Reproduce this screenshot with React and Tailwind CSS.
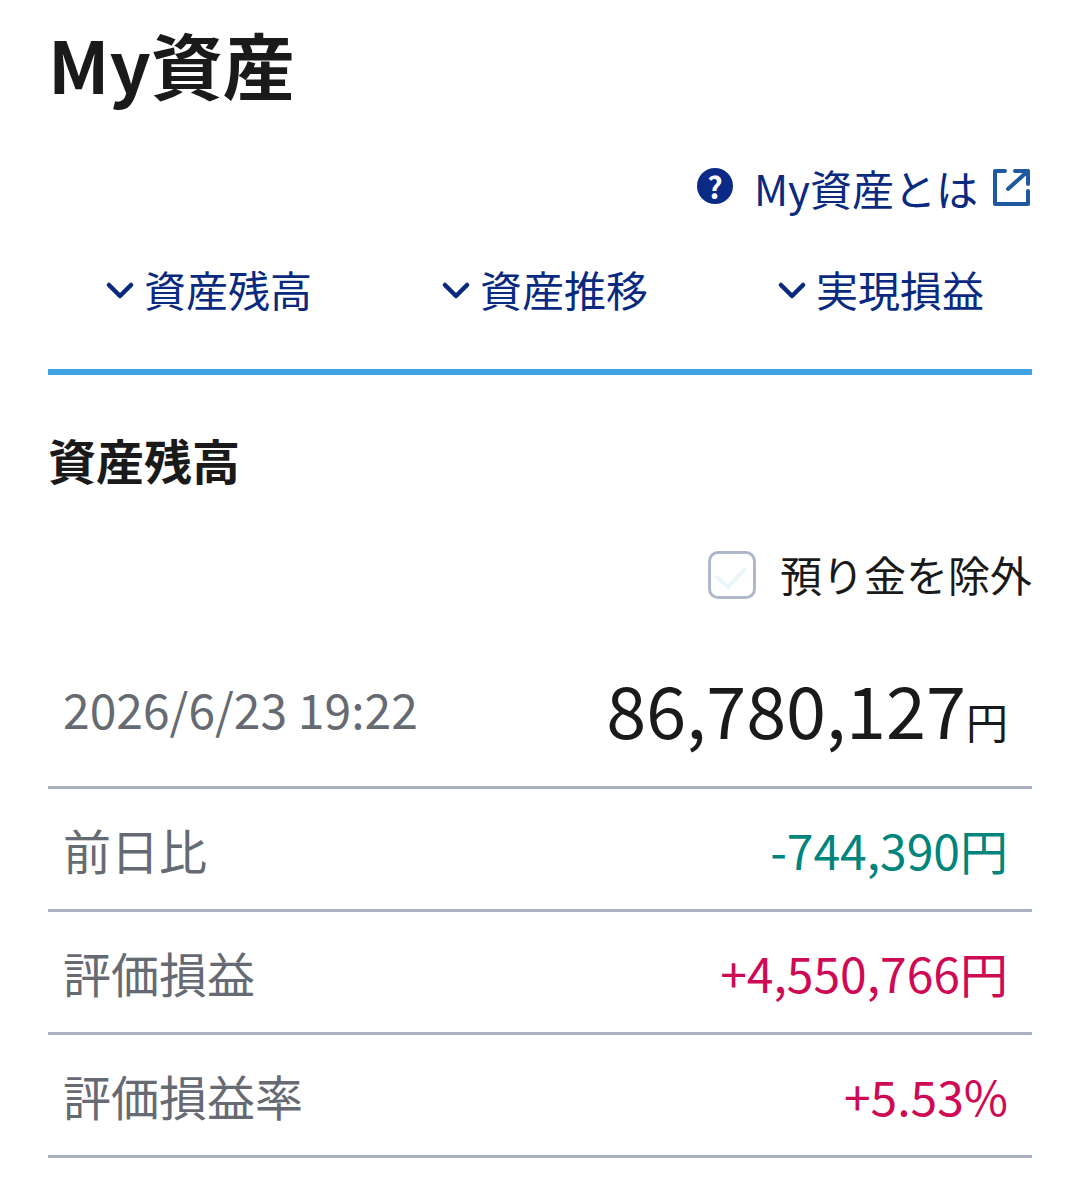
const rows = [
  { label: "前日比", value: "-744,390円", color: "text-[#00857c]" },
  { label: "評価損益", value: "+4,550,766円", color: "text-[#cf0a55]" },
  { label: "評価損益率", value: "+5.53%", color: "text-[#cf0a55]" },
];

const tabs = ["資産残高", "資産推移", "実現損益"];

export default function App() {
  return (
    <div className="h-[1194px] w-[1080px] overflow-hidden bg-white px-12 font-['Noto_Sans_CJK_JP','Noto_Sans',sans-serif] text-[#1a1a1a]">
      <h1 className="pt-[11px] text-[72px] leading-[104px] font-bold">My資産</h1>

      <div className="mt-[42px] flex h-[60px] items-center justify-end text-[42px] text-[#0a2a7f]">
        <span className="mb-[2px] flex h-9 w-9 items-center justify-center rounded-full bg-[#0a2a85] text-[30px] leading-none font-bold text-white">?</span>
        <span className="ml-[21px]">My資産とは</span>
        <svg className="mr-[2px] ml-[15px] h-[37px] w-[37px]" viewBox="0 0 37 37" fill="none" stroke="#1f5aa0" strokeWidth="4" strokeLinejoin="round" strokeLinecap="round">
          <path d="M12 2H2v33h33V22" />
          <path d="M15 20L35 2M22 2h13v13" />
        </svg>
      </div>

      <div className="mt-[41px] flex h-[109px] gap-[130px] pl-[58px] text-[42px] text-[#0a2a7f]">
        {tabs.map((tab) => (
          <div key={tab} className="flex h-[60px] items-center">
            <svg className="mt-[6px] mr-[10px] h-[20px] w-[28px]" viewBox="0 0 28 20" fill="none" stroke="#0a2a7f" strokeWidth="4.5" strokeLinecap="round" strokeLinejoin="round">
              <path d="M3 4l11 11L25 4" />
            </svg>
            <span>{tab}</span>
          </div>
        ))}
      </div>
      <div className="mt-[2px] h-[6px] bg-[#3fa3e3]" />

      <h2 className="mt-[49px] text-[48px] leading-[70px] font-bold">資産残高</h2>

      <div className="mt-[48px] flex h-[62px] items-center justify-end">
        <span className="relative mt-[3px] h-[48px] w-[48px] rounded-[10px] border-[3px] border-[#aeb8c8]">
          <svg className="absolute inset-0 h-[42px] w-[42px]" viewBox="0 0 42 42" fill="none" stroke="#eaf6fb" strokeWidth="4">
            <path d="M5 22l12 11L35 14" />
          </svg>
        </span>
        <span className="ml-[24px] text-[42px]">預り金を除外</span>
      </div>

      <div className="mt-[25px] flex h-[160px] items-center justify-between border-b-[3px] border-[#a9b1bf] pr-6 pl-[15px]">
        <span className="text-[48px] text-[#666b73]">2026/6/23 19:22</span>
        <span className="flex items-baseline">
          <span className="text-[72px]">86,780,127</span>
          <span className="text-[42px]">円</span>
        </span>
      </div>

      {rows.map((row) => (
        <div key={row.label} className="flex h-[123px] items-center justify-between border-b-[3px] border-[#a9b1bf] pr-6 pl-[15px]">
          <span className="text-[48px] text-[#666b73]">{row.label}</span>
          <span className={`text-[48px] ${row.color}`}>{row.value}</span>
        </div>
      ))}
    </div>
  );
}
